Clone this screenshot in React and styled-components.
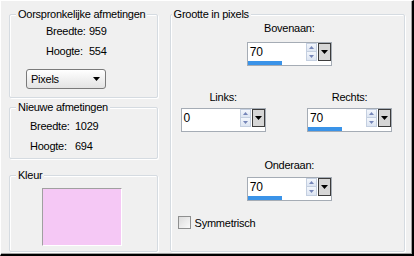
import React from "react";
import styled, { createGlobalStyle } from "styled-components";

const GlobalStyle = createGlobalStyle`
  html, body { margin: 0; padding: 0; background: #f0f0f0; }
  * { box-sizing: border-box; }
`;

const Dialog = styled.div`
  width: 414px;
  height: 256px;
  display: flex;
  gap: 12px;
  padding: 13px 7px 0 8px;
  background: #f0f0f0;
  border-top: 1px solid #fff;
  border-left: 1px solid #fff;
  border-right: 2px solid #000;
  border-bottom: 2px solid #000;
  box-shadow: inset -1px -1px 0 #a0a0a0;
  font-family: "Liberation Sans", Arial, sans-serif;
  font-size: 11px;
  letter-spacing: -0.25px;
  color: #000;
`;

const Column = styled.div`
  display: flex;
  flex-direction: column;
  width: ${({ $w }) => $w}px;
`;

const Group = styled.div`
  position: relative;
  height: ${({ $h }) => $h}px;
  margin-top: ${({ $mt }) => $mt || 0}px;
  padding: ${({ $pad }) => $pad || "0"};
  border: 1px solid #d5dbe1;
  border-radius: 2px;
  box-shadow: inset 1px 1px 0 #fff, 1px 1px 0 #fff;
`;

const Legend = styled.span`
  position: absolute;
  top: -8px;
  left: ${({ $left }) => ($left === undefined ? 6 : $left)}px;
  padding: 0 2px;
  line-height: 14px;
  background: #f0f0f0;
`;

const InfoGrid = styled.div`
  display: grid;
  grid-template-columns: ${({ $lw }) => $lw}px auto;
  grid-auto-rows: 20px;
  align-items: center;
  margin-left: ${({ $ml }) => $ml}px;
`;

const Select = styled.div`
  display: flex;
  align-items: center;
  justify-content: space-between;
  width: 80px;
  height: 20px;
  margin: 8px 0 0 16px;
  padding: 0 5px 0 4px;
  border: 1px solid #7a7a7a;
  border-radius: 3px;
  background: linear-gradient(#ffffff, #e3e3e3);
`;

const Swatch = styled.div`
  width: 80px;
  height: 58px;
  margin: 12px 0 0 32px;
  background: #f5c8f5;
  border-top: 1px solid #a0a0a0;
  border-left: 1px solid #a0a0a0;
  border-right: 1px solid #fff;
  border-bottom: 1px solid #fff;
`;

const Row = styled.div`
  display: flex;
  justify-content: ${({ $justify }) => $justify || "center"};
  padding: ${({ $pad }) => $pad || "0"};
  margin-top: ${({ $mt }) => $mt || 0}px;
`;

const Field = styled.div`
  display: flex;
  flex-direction: column;
  align-items: center;
`;

const FieldLabel = styled.div`
  line-height: 14px;
  margin-bottom: ${({ $mb }) => $mb}px;
`;

const SpinBox = styled.div`
  display: flex;
  flex-direction: column;
  width: 85px;
  height: 24px;
  border: 1px solid #a5acb5;
  background: #fff;
`;

const SpinTop = styled.div`
  display: flex;
  height: 18px;
`;

const Value = styled.div`
  flex: 1;
  padding: 1px 0 0 2px;
  font-size: 12px;
  line-height: 16px;
`;

const Arrows = styled.div`
  display: flex;
  flex-direction: column;
  width: 11px;
  margin-right: 1px;
`;

const ArrowBtn = styled.div`
  height: 9px;
  display: flex;
  align-items: center;
  justify-content: center;
  background: linear-gradient(#f4f7fc, #dde5f2);
  border: 1px solid #c4cfe0;
  border-top-width: ${({ $down }) => ($down ? 0 : 1)}px;
`;

const DropBtn = styled.div`
  width: 13px;
  display: flex;
  align-items: center;
  justify-content: center;
  background: #d6d6d6;
  border: 1px solid #3c3c3c;
`;

const Track = styled.div`
  height: 4px;
  background: #fff;
`;

const Fill = styled.div`
  height: 4px;
  background: #3a93e8;
`;

const CheckRow = styled.label`
  display: flex;
  align-items: center;
  gap: 4px;
  margin: 15px 0 0 7px;
`;

const Box = styled.span`
  width: 13px;
  height: 13px;
  border: 1px solid #8e8f8f;
  background: linear-gradient(135deg, #dcdcdc, #fafafa);
`;

function Tri({ up, color = "#000", w = 7, h = 4 }) {
  return (
    <svg width={w} height={h} viewBox="0 0 7 4">
      <polygon points={up ? "0,4 7,4 3.5,0" : "0,0 7,0 3.5,4"} fill={color} />
    </svg>
  );
}

function Spinner({ value, fill }) {
  return (
    <SpinBox>
      <SpinTop>
        <Value>{value}</Value>
        <Arrows>
          <ArrowBtn><Tri up color="#7585b8" w={5} h={3} /></ArrowBtn>
          <ArrowBtn $down><Tri color="#7585b8" w={5} h={3} /></ArrowBtn>
        </Arrows>
        <DropBtn><Tri w={7} h={4} /></DropBtn>
      </SpinTop>
      <Track>{fill > 0 && <Fill style={{ width: fill }} />}</Track>
    </SpinBox>
  );
}

export default function App() {
  return (
    <>
      <GlobalStyle />
      <Dialog>
        <Column $w={149}>
          <Group $h={84} $pad="6px 0 0 0">
            <Legend>Oorspronkelijke afmetingen</Legend>
            <InfoGrid $lw={43} $ml={36}>
              <span>Breedte:</span><span>959</span>
              <span>Hoogte:</span><span>554</span>
            </InfoGrid>
            <Select>
              <span>Pixels</span>
              <Tri />
            </Select>
          </Group>
          <Group $h={52} $mt={9} $pad="8px 0 0 0">
            <Legend>Nieuwe afmetingen</Legend>
            <InfoGrid $lw={45} $ml={20}>
              <span>Breedte:</span><span>1029</span>
              <span>Hoogte:</span><span>694</span>
            </InfoGrid>
          </Group>
          <Group $h={77} $mt={16}>
            <Legend>Kleur</Legend>
            <Swatch />
          </Group>
        </Column>
        <Column $w={236}>
          <Group $h={238} $pad="6px 0 0 0">
            <Legend $left={1}>Grootte in pixels</Legend>
            <Row $pad="0 0 0 4px">
              <Field>
                <FieldLabel $mb={7}>Bovenaan:</FieldLabel>
                <Spinner value="70" fill={34} />
              </Field>
            </Row>
            <Row $justify="space-between" $pad="0 12px 0 10px" $mt={24}>
              <Field>
                <FieldLabel $mb={4}>Links:</FieldLabel>
                <Spinner value="0" fill={0} />
              </Field>
              <Field>
                <FieldLabel $mb={4}>Rechts:</FieldLabel>
                <Spinner value="70" fill={34} />
              </Field>
            </Row>
            <Row $pad="0 0 0 4px" $mt={26}>
              <Field>
                <FieldLabel $mb={5}>Onderaan:</FieldLabel>
                <Spinner value="70" fill={34} />
              </Field>
            </Row>
            <CheckRow>
              <Box />
              <span>Symmetrisch</span>
            </CheckRow>
          </Group>
        </Column>
      </Dialog>
    </>
  );
}
